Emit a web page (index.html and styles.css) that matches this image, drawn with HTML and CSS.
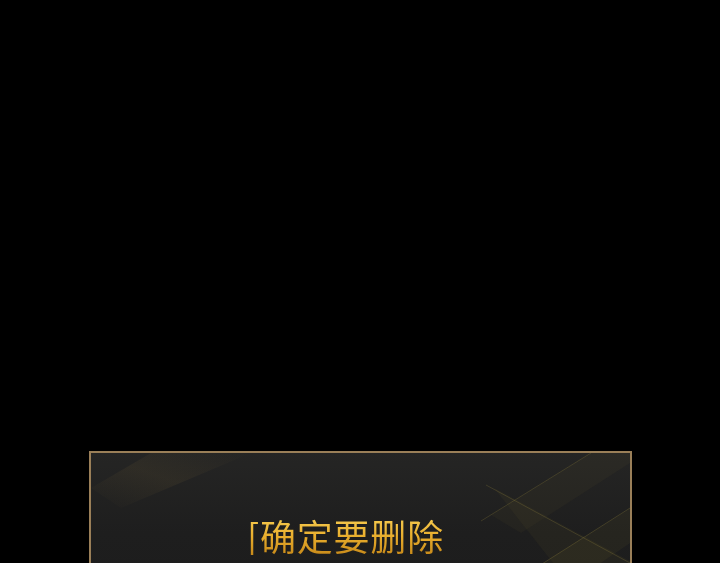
FILE: index.html
```html
<!DOCTYPE html>
<html lang="zh">
<head>
<meta charset="utf-8">
<link rel="stylesheet" href="styles.css">
</head>
<body>
<div class="screen">
  <div class="dialog">
    <svg class="deco" width="539" height="200" viewBox="0 0 539 200">
      <defs>
        <linearGradient id="glow" x1="0" y1="1" x2="1" y2="0">
          <stop offset="0" stop-color="#c9a14a" stop-opacity="0"/>
          <stop offset="0.5" stop-color="#c9a14a" stop-opacity="0.07"/>
          <stop offset="1" stop-color="#c9a14a" stop-opacity="0"/>
        </linearGradient>
      </defs>
      <polygon points="0,35 60,0 160,0 30,55" fill="url(#glow)"/>
      <polygon points="400,62 500,0 539,0 539,10 430,80" fill="#a08a3a" fill-opacity="0.05"/>
      <polygon points="403,35 539,108 539,160 470,120" fill="#a08a3a" fill-opacity="0.06"/>
      <polygon points="450,111 539,55 539,90 480,130" fill="#a08a3a" fill-opacity="0.07"/>
      <line x1="500" y1="0" x2="390" y2="68" stroke="#9c8a40" stroke-opacity="0.25" stroke-width="1"/>
      <line x1="395" y1="32" x2="539" y2="110" stroke="#9c8a40" stroke-opacity="0.25" stroke-width="1"/>
      <line x1="539" y1="55" x2="440" y2="118" stroke="#9c8a40" stroke-opacity="0.25" stroke-width="1"/>
    </svg>
    <p class="msg">[确定要删除</p>
  </div>
</div>
</body>
</html>
```
FILE: styles.css
```css
html, body {
  margin: 0;
  padding: 0;
  background: #000;
}
.screen {
  width: 720px;
  height: 563px;
  overflow: hidden;
  background: #000;
  padding-top: 451px;
  box-sizing: border-box;
}
.dialog {
  position: relative;
  margin-left: 89px;
  width: 539px;
  height: 200px;
  border: 2px solid #9a7f58;
  background: linear-gradient(180deg, #252524 0%, #1e1e1e 40%, #1b1b1b 100%);
  overflow: hidden;
}
.deco {
  position: absolute;
  left: 0;
  top: 0;
}
.msg {
  position: relative;
  margin: 0;
  padding-top: 62px;
  padding-left: 156px;
  font-family: "Noto Sans CJK SC", sans-serif;
  font-size: 36px;
  line-height: 40px;
  letter-spacing: 0.8px;
  color: #e6ab2c;
  background: linear-gradient(180deg, #f7cf55 0%, #e8ad2c 55%, #c88a1a 100%);
  background-clip: text;
  -webkit-background-clip: text;
  -webkit-text-fill-color: transparent;
  background-origin: content-box;
  width: fit-content;
}
```
